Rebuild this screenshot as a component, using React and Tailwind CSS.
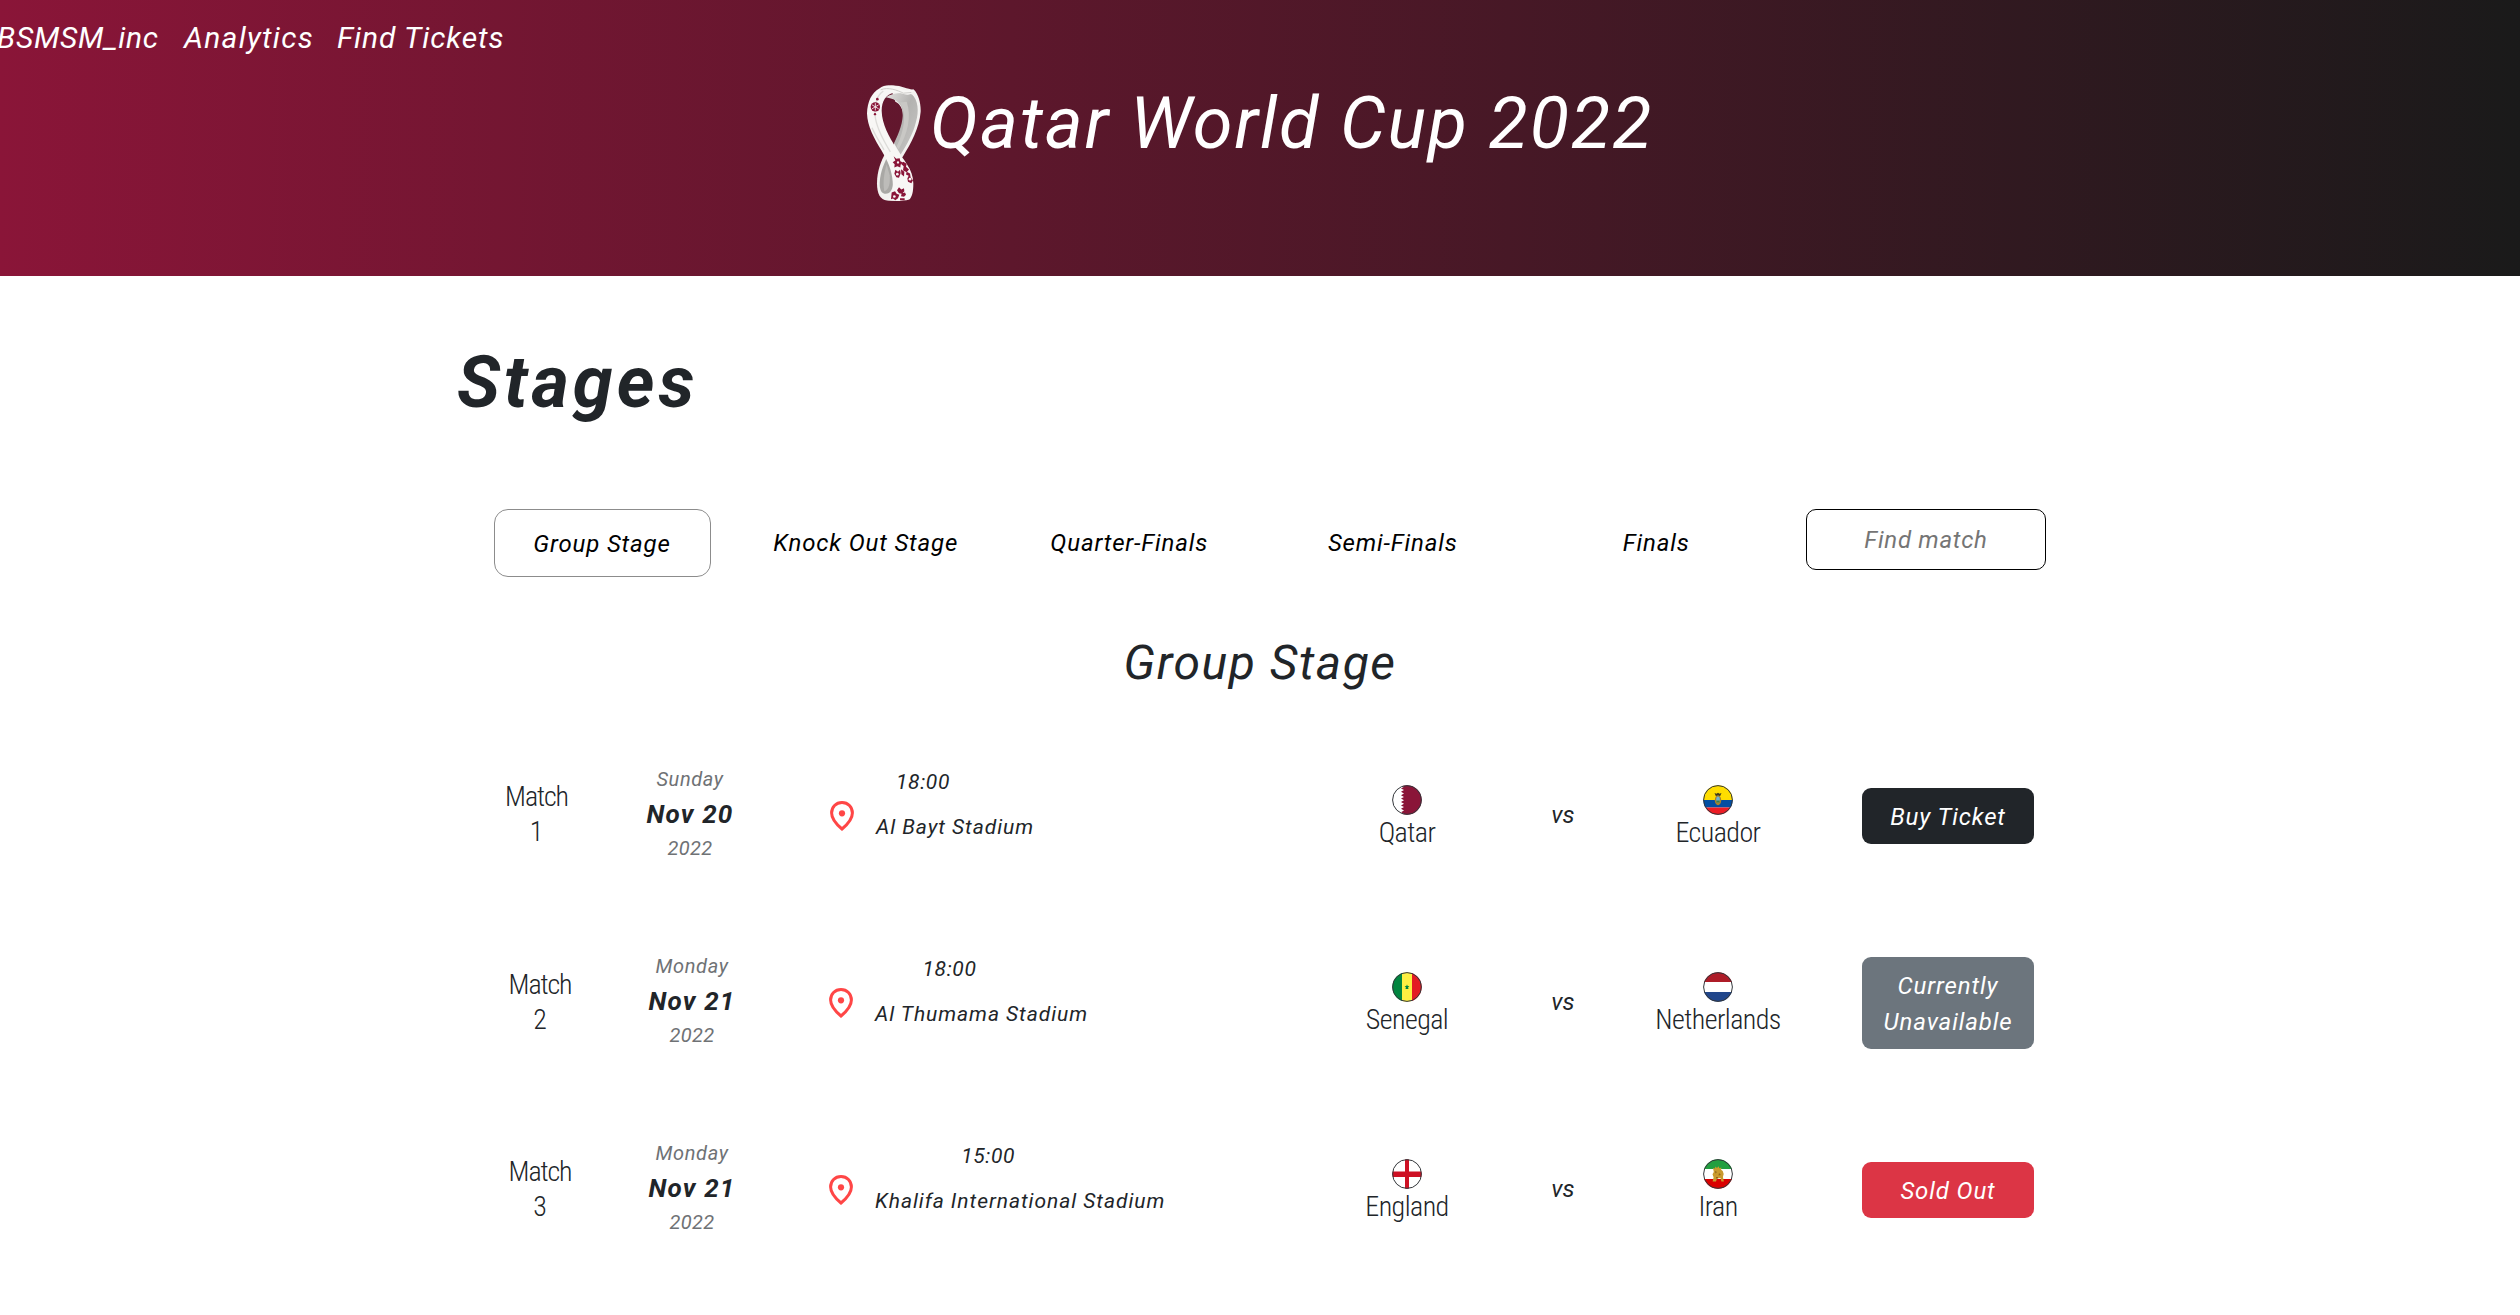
const TABS = ["Knock Out Stage", "Quarter-Finals", "Semi-Finals", "Finals"];

const MATCHES = [
  { id: 1, day: "Sunday", date: "Nov 20", time: "18:00", stadium: "Al Bayt Stadium", home: "Qatar", away: "Ecuador", status: "buy" },
  { id: 2, day: "Monday", date: "Nov 21", time: "18:00", stadium: "Al Thumama Stadium", home: "Senegal", away: "Netherlands", status: "unavailable" },
  { id: 3, day: "Monday", date: "Nov 21", time: "15:00", stadium: "Khalifa International Stadium", home: "England", away: "Iran", status: "soldOut" },
];

const STATUS = {
  buy: { label: "Buy Ticket", style: "h-14 bg-[#212529]" },
  unavailable: { label: "Currently Unavailable", style: "h-[92px] bg-[#6c757d]" },
  soldOut: { label: "Sold Out", style: "h-14 bg-[#dc3545]" },
};

const FLAGS = {
  Qatar: (
    <>
      <path fill="#fff" d="M0 0h12v30H0z" />
      <path fill="#8a1538" d="M30 0H9l3 1.7-3 1.7 3 1.7-3 1.7 3 1.7-3 1.7 3 1.7-3 1.7 3 1.7-3 1.7 3 1.7-3 1.7 3 1.7-3 1.7 3 1.7-3 1.7 3 1.5-3 1.3h21z" />
    </>
  ),
  Ecuador: (
    <>
      <path fill="#ffdd00" d="M0 0h30v15H0z" />
      <path fill="#034ea2" d="M0 15h30v7.5H0z" />
      <path fill="#ed1c24" d="M0 22.500h30V30H0z" />
      <path fill="#3d3a1e" d="M11.500 8l2 .8 1.500-1 1.500 1 2-.8-1.300 3h-4.400z" />
      <ellipse cx="15" cy="15.300" rx="3.200" ry="5" fill="#a8842c" />
      <ellipse cx="15" cy="14.500" rx="1.800" ry="3" fill="#6fb3d2" />
      <path fill="#3f7f45" d="M13.400 15.500h3.200v2h-3.200z" />
    </>
  ),
  Senegal: (
    <>
      <path fill="#00853f" d="M0 0h10v30H0z" />
      <path fill="#fdef42" d="M10 0h10v30H10z" />
      <path fill="#e31b23" d="M20 0h10v30H20z" />
      <path fill="#00853f" d="M15 12.500l.7 1.500h1.700l-1.300 1.200.4 1.800h-3l.4-1.800-1.300-1.200h1.700z" />
    </>
  ),
  Netherlands: (
    <>
      <path fill="#ae1c28" d="M0 0h30v10H0z" />
      <path fill="#fff" d="M0 10h30v10H0z" />
      <path fill="#21468b" d="M0 20h30v10H0z" />
    </>
  ),
  England: (
    <>
      <path fill="#fff" d="M0 0h30v30H0z" />
      <path fill="#ce1124" d="M13 0h4v30h-4zM0 12.500h30v5.500H0z" />
    </>
  ),
  Iran: (
    <>
      <path fill="#239f40" d="M0 0h30v10H0z" />
      <path fill="#fff" d="M0 10h30v10H0z" />
      <path fill="#da0000" d="M0 20h30v10H0z" />
      <path fill="#c99a2e" d="M10 9l2 .6.300-2 1.700 1.400 1.500-1.800.9 2 2-.6-.3 2.200 1.600 1.200 1 3-.8 3 1 4.500h-2.500l-.9-3.500-3.500.4-1 3H9.600l1-4.200-1.100-3 1.300-2.200z" />
      <path fill="#8c641b" d="M12 12l2 1-1.500 1.500zM16 14l2 2-2.500.5zM13 18h2v1.500h-2z" />
    </>
  ),
};

function Flag({ name }) {
  return (
    <svg viewBox="0 0 30 30" className="block size-[30px]" aria-label={name}>
      <clipPath id={"round-" + name}>
        <circle cx="15" cy="15" r="14.700" />
      </clipPath>
      <g clipPath={"url(#round-" + name + ")"}>{FLAGS[name]}</g>
      <circle cx="15" cy="15" r="14.400" fill="none" stroke="#33363a" strokeWidth="1" />
    </svg>
  );
}

function Pin() {
  return (
    <svg viewBox="0 0 24 30" className="mt-[33px] block h-[30px] w-6 shrink-0">
      <path d="M12 1.500C6 1.500 1.600 6 1.600 12c0 5.200 4.400 11 10.400 16 6-5 10.400-10.800 10.400-16C22.400 6 18 1.500 12 1.500z" fill="none" stroke="#ff4646" strokeWidth="3" />
      <circle cx="12" cy="12.300" r="3.100" fill="#ff4646" />
    </svg>
  );
}

function Emblem() {
  return (
    <svg viewBox="51 30 162 347" className="h-[116px] w-[54px] shrink-0">
      <defs>
        <linearGradient id="inner" x1="0" x2="1" y1="0" y2="1">
          <stop offset="0" stopColor="#e2e1df" />
          <stop offset="0.450" stopColor="#b3b2b0" />
          <stop offset="1" stopColor="#c9c8c6" />
        </linearGradient>
      </defs>
      <path fill="#f3f2f0" d="M120 32C150 28 168 42 192 44c14 14 21 42 20 66-4 50-30 96-52 132-12 18-20 32-24 50l-30-38c18-34 40-66 50-102 8-34 2-62-20-72z" />
      <path fill="url(#inner)" d="M108 66c22-16 62-14 78-8 18 16 22 50 12 82-8 34-26 66-46 98l-20-34c16-32 28-64 26-92-2-26-16-40-50-46z" />
      <path fill="#c9c8c5" d="M150 82c20 32 14 84-10 132l6 8c26-44 40-98 24-142z" />
      <path fill="#f3f2f0" d="M108 232c-16 26-27 58-27 92 0 32 10 50 30 52h34l-2-90z" />
      <path fill="#a9a8a5" d="M112 246c-14 26-24 56-23 86 2 18 8 24 18 24 14 0 22-14 23-36 1-26-6-52-18-74z" />
      <path fill="#bdbcb9" d="M110 268c-8 26-12 54-7 80 14-4 18-24 16-48z" />
      <path fill="#f8f7f5" d="M88 40c12-10 28-12 44-8 16 4 24 14 38 14l22-3c-4 10-12 16-20 16-14-2-26-10-42-6-22 6-35 24-35 54 1 42 22 76 43 112 22 36 52 62 52 106 0 26-4 40-12 48-18 5-46 6-66 2 14-8 18-28 16-56-2-32-14-60-33-92-22-36-43-74-44-112 1-36 14-62 37-75z" />
      <path fill="none" stroke="#dddcd9" strokeWidth="4" d="M100 48C78 62 74 88 75 118c2 36 24 76 46 112M66 158c10 24 24 44 36 66" />
      <path fill="none" stroke="#cfcecb" strokeWidth="3" d="M92 44c22-10 52 2 68 10l24-2" />
      <g fill="#8a1538">
        <circle cx="76" cy="95" r="14" />
        <circle cx="82" cy="72" r="4" />
        <circle cx="75" cy="117" r="3.500" />
        <path d="M131 243l8 8 10-2 2 9 8 4-7 6-1 9-9-4-9 4 1-10-6-6 8-5zM160 260l10 6-2 9 9 8-7 8-11-6 2-12-7-6zM136 284l8 6 6-6 2 10-5 14-8-2-6-10zM153 282l10 8-1 14-8-7zM170 290l10 5 2 12 7 8-5 9-10-4-2-10 4-8-8-4zM147 336l7 7 8-4 1 9-7 8-9-2-6-9zM125 352l10-4 5 8 8 3-4 10-8 6-7-5-6 2zM155 355l10-3 3 7-6 6-9-2zM150 369l14 0 0 6-14 0z" />
      </g>
      <g fill="none" stroke="#f8f7f5" strokeWidth="2.500">
        <path d="M76 84v22M66 89l20 12M86 89L66 101" />
      </g>
      <g fill="#f8f7f5">
        <circle cx="144" cy="262" r="3.500" />
        <circle cx="142" cy="297" r="4" />
        <circle cx="180" cy="312" r="4" />
        <circle cx="133" cy="364" r="4" />
      </g>
    </svg>
  );
}

function Team({ name }) {
  return (
    <div className="flex flex-col items-center pt-[17px]">
      <Flag name={name} />
      <span className="mt-px text-[28px] leading-[34px] font-light tracking-[-0.02em] [font-stretch:75%]">{name}</span>
    </div>
  );
}

function MatchRow({ match }) {
  const status = STATUS[match.status];
  const first = match.id === 1;
  return (
    <div className="grid h-[92px] grid-cols-[133px_174px_542px_176px_136px_174px_229px]">
      <div className={first ? "flex flex-col items-center pt-3" : "flex flex-col items-center pt-[13px] pl-[7px]"}>
        <span className="text-[28px] leading-[34.5px] font-light tracking-[-0.04em] [font-stretch:75%]">Match</span>
        <span className="text-[28px] leading-[34.5px] font-light [font-stretch:75%]">{match.id}</span>
      </div>
      <div className={first ? "flex flex-col items-center italic" : "flex flex-col items-center pl-1 italic"}>
        <span className="-mt-1 text-[20px] leading-[30px] tracking-[0.03em] text-[#6f7275]">{match.day}</span>
        <span className="mt-px text-[26px] leading-[38px] font-bold tracking-[0.045em]">{match.date}</span>
        <span className="text-[20px] leading-[30px] tracking-[0.015em] text-[#6f7275]">2022</span>
      </div>
      <div className={first ? "flex items-start gap-[22px] pl-[53px] italic" : "flex items-start gap-[22px] pl-[52px] italic"}>
        <Pin />
        <div className="flex flex-col items-center gap-[15px] text-[21px] leading-[30px] tracking-[0.045em]">
          <span className="-mt-px mr-16 tracking-[0.03em]">{match.time}</span>
          <span>{match.stadium}</span>
        </div>
      </div>
      <Team name={match.home} />
      <div className="pt-8 text-center text-[24px] leading-[30px] italic">vs</div>
      <Team name={match.away} />
      <div className="flex items-center pl-[57px]">
        <button className={"flex w-[172px] items-center justify-center rounded-[9px] px-4 pt-0.5 text-center text-[24px] leading-9 tracking-[0.036em] text-white italic " + status.style}>
          {status.label}
        </button>
      </div>
    </div>
  );
}

export default function App() {
  return (
    <div className="min-h-[1315px] w-[2520px] overflow-hidden bg-white font-['Roboto',sans-serif] text-[#212529]">
      <header className="h-[276px] bg-[linear-gradient(90deg,#8a1538,#1a1a1a)] pt-[15px] text-white italic">
        <nav className="flex text-[30px] leading-[46px]">
          <a className="-ml-[3px] w-[187px] tracking-[0.025em]">BSMSM_inc</a>
          <a className="w-[153px] tracking-[0.042em]">Analytics</a>
          <a className="tracking-[0.03em]">Find Tickets</a>
        </nav>
        <div className="mt-6 flex items-start pl-[867px]">
          <Emblem />
          <h1 className="ml-[9px] text-[72px] leading-[78px] tracking-[0.027em] whitespace-nowrap">Qatar World Cup 2022</h1>
        </div>
      </header>

      <main>
        <h2 className="mt-16 pl-[457px] text-[72px] leading-[86px] font-bold tracking-[0.055em] italic">Stages</h2>

        <div className="mt-[83px] flex h-[68px] pl-[470px] text-[24px] tracking-[0.035em] text-black italic">
          <div className="flex w-[264px] justify-center">
            <button className="h-[68px] w-[217px] rounded-[14px] border border-[#8c8c8c] pt-0.5">Group Stage</button>
          </div>
          {TABS.map((tab) => (
            <button key={tab} className="w-[263.5px]">{tab}</button>
          ))}
          <input
            placeholder="Find match"
            className="ml-[18px] h-[61px] w-[240px] rounded-[10px] border border-black text-center tracking-[0.03em] italic placeholder:text-[#757575]"
          />
        </div>

        <h3 className="mt-[57px] text-center text-[48px] leading-[58px] tracking-[0.032em] italic">Group Stage</h3>

        <section className="mt-[76px] flex flex-col gap-[95px] pl-[470px]">
          {MATCHES.map((match) => (
            <MatchRow key={match.id} match={match} />
          ))}
        </section>
      </main>
    </div>
  );
}
